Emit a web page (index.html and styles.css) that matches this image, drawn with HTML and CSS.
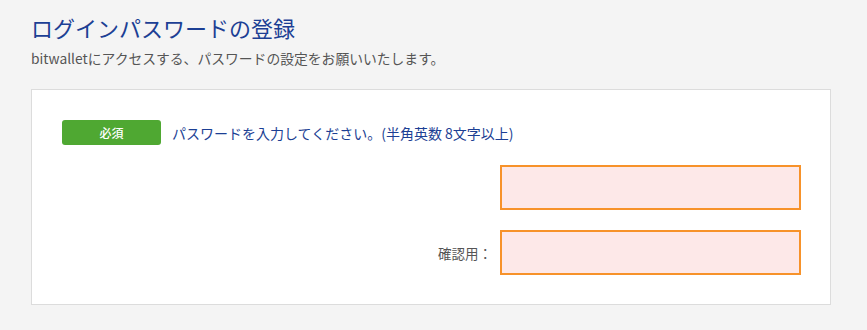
FILE: index.html
```html
<!DOCTYPE html>
<html lang="ja">
<head>
<meta charset="utf-8">
<link rel="stylesheet" href="styles.css">
</head>
<body>
<div class="page">
  <h1 class="title">ログインパスワードの登録</h1>
  <p class="lead">bitwalletにアクセスする、パスワードの設定をお願いいたします。</p>
  <div class="card">
    <div class="req-row">
      <span class="badge">必須</span>
      <span class="req-label">パスワードを入力してください。(半角英数 8文字以上)</span>
    </div>
    <div class="field">
      <span class="field-label"></span>
      <input class="input" type="password">
    </div>
    <div class="field">
      <span class="field-label">確認用：</span>
      <input class="input" type="password">
    </div>
  </div>
</div>
</body>
</html>
```
FILE: styles.css
```css
html, body {
  margin: 0;
  padding: 0;
  background: #f4f4f4;
  font-family: "Noto Sans CJK JP", "Noto Sans", sans-serif;
}
.page {
  padding: 12px 36px 0 31px;
}
.title {
  margin: 0;
  font-size: 22px;
  font-weight: normal;
  color: #1c3f94;
  line-height: 30px;
}
.lead {
  margin: 6px 0 0;
  font-size: 13.8px;
  color: #555;
  line-height: 20px;
}
.card {
  margin-top: 21px;
  background: #fff;
  border: 1px solid #dcdcdc;
  padding: 30px 29px 29px 30px;
  display: flex;
  flex-direction: column;
  gap: 20px;
}
.req-row {
  display: flex;
  align-items: center;
  gap: 11px;
  height: 25px;
}
.badge {
  width: 99px;
  height: 25px;
  background: #4fa832;
  color: #fff;
  border-radius: 3px;
  font-size: 12px;
  font-weight: 500;
  display: flex;
  align-items: center;
  justify-content: center;
}
.req-label {
  font-size: 14px;
  color: #1c3f94;
}
.field {
  display: flex;
  justify-content: flex-end;
  align-items: center;
  gap: 8px;
}
.field-label {
  font-size: 13.5px;
  color: #555;
}
.input {
  box-sizing: border-box;
  width: 301px;
  height: 45px;
  border: 2px solid #f7922a;
  background: #fde8e8;
  margin: 0;
  padding: 0 8px;
  outline: none;
}
```
